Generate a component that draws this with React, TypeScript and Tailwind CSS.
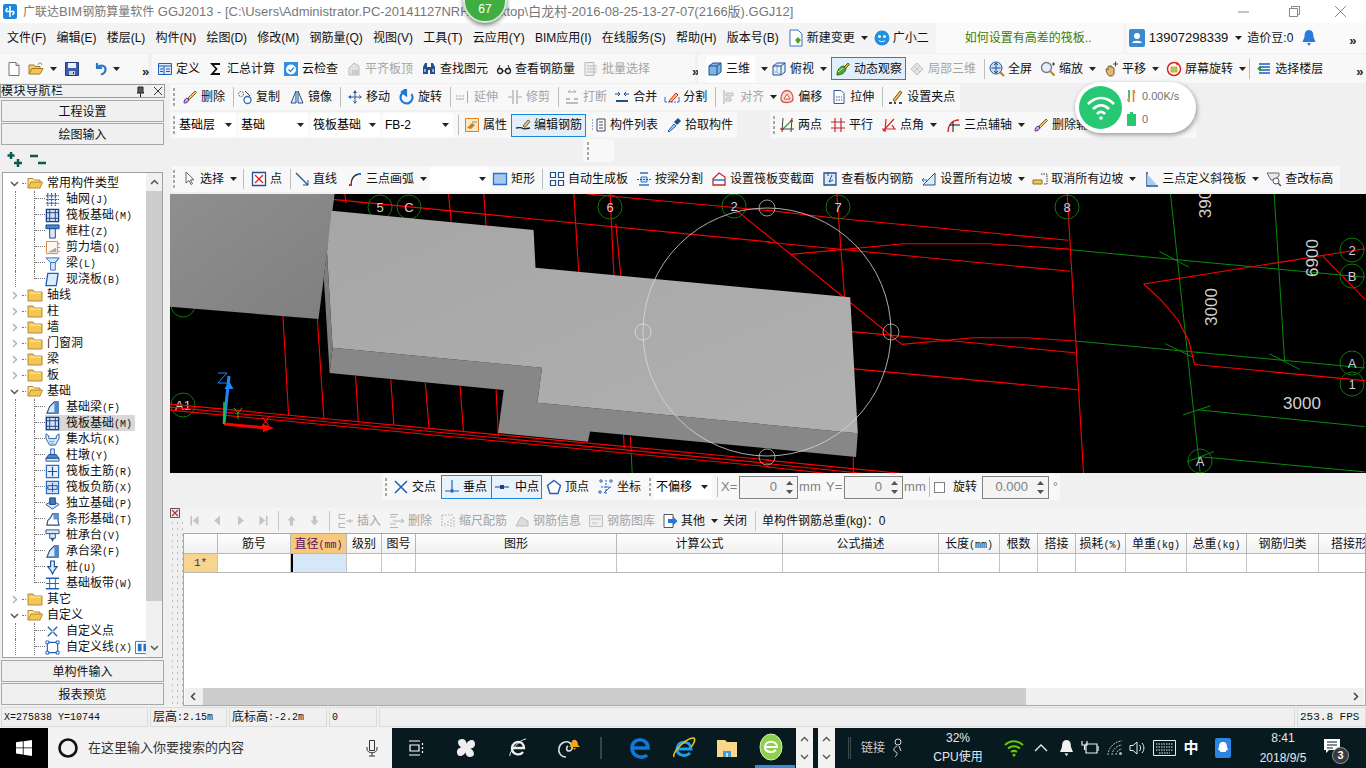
import type { ReactNode } from "react";

const B = "#1f5fb8";
const R = "#e02020";
const GY = "#a8a8a8";
const Y = "#f4c64e";

const icons: Record<string, ReactNode> = {
  new: <><path d="M3 1.500h7l3 3v10H3z" fill="#fff" stroke="#777" /><path d="M10 1.500v3h3" fill="#ddd" stroke="#777" /></>,
  open: <><path d="M1 13V4h5l1 1.500h5V8" fill="#f3cf72" stroke="#a87a20" /><path d="M1 13l3-5.500h11L12 13z" fill={Y} stroke="#a87a20" /><path d="M10 3.500c1-2 3-2 4 0" fill="none" stroke="#3a70c0" /></>,
  save: <><path d="M1.500 1.500h13v13h-13z" fill="#3c5fb0" stroke="#22397c" /><path d="M4 2h8v5H4z" fill="#eef" /><path d="M5 10h6v4H5z" fill="#ccd" /><path d="M9 11h1v2H9z" fill="#335" /></>,
  undo: <path d="M4 2v5h5M4.500 6.500C7 3.500 13 4 12.500 9c-.3 2.500-2.500 4-4.500 4.500" fill="none" stroke="#2a78d0" strokeWidth="2.200" />,
  define: <><path d="M1.500 2.500h13v11h-13z" fill="#dbe9f8" stroke={B} /><path d="M1.500 5h13M7 5v8.500M3 8h3M3 10.500h3M9 8h4M9 10.500h4" stroke={B} /></>,
  sigma: <path d="M12 3H4l4.500 5L4 13h8" fill="none" stroke="#111" strokeWidth="1.800" />,
  cloud: <><path d="M1 1h14v14H1z" fill="#2f8fe0" /><circle cx="8" cy="8.500" r="5" fill="#fff" /><path d="M5.500 8.500l2 2 3.500-4" fill="none" stroke="#2f8fe0" strokeWidth="1.500" /></>,
  flat: <><path d="M3 14V7l5-5 5 3v9z" fill="#e2e2e2" stroke="#bbb" /><path d="M6 9h6v5H6z" fill="#ccc" /></>,
  find: <><path d="M2 6l2-4h2v4h4V2h2l2 4v7h-5V9H7v4H2z" fill="#24508c" /><path d="M3 8h2v3H3zM11 8h2v3h-2z" fill="#7fb2ea" /></>,
  glasses: <><circle cx="4" cy="10" r="2.500" fill="none" stroke="#222" strokeWidth="1.300" /><circle cx="12" cy="10" r="2.500" fill="none" stroke="#222" strokeWidth="1.300" /><path d="M6.500 10h3M2 9l2-5M14 9l-2-5" stroke="#222" /></>,
  batch: <><path d="M2 1.500h9v13H2z" fill="#eee" stroke="#bbb" /><path d="M4 5h10M4 8h10M4 11h10" stroke="#bbb" /></>,
  cube: <><path d="M2 5l4-3h8v9l-4 3H2z" fill="#7fb6e6" stroke="#1d4f88" /><path d="M2 5h8v9M10 5l4-3" fill="none" stroke="#1d4f88" /></>,
  cubet: <><path d="M2 5l4-3h8v9l-4 3H2z" fill="#e8f1fa" stroke="#1d4f88" /><path d="M6 2v9H2M6 11l4 3" fill="none" stroke="#7fb2ea" /><path d="M2 5h8v9M10 5l4-3" fill="none" stroke="#1d4f88" /></>,
  orbit: <><path d="M2 14c0-5 3-9 7-9l2 2c0 4-4 7-9 7z" fill="#48a838" stroke="#1f6a1c" /><path d="M9 6l4-4 1.500 1.500-4 4z" fill="#d8b020" stroke="#6a5a10" /><path d="M3 11l5-4" stroke="#d8f0a0" /></>,
  gray3d: <><path d="M2 8l6-6 6 6-6 6z" fill="#e4e4e4" stroke="#c0c0c0" /><path d="M5 5l6 6M11 5l-6 6" stroke="#c8c8c8" /></>,
  globe: <><circle cx="7" cy="7" r="6" fill="#c9dcf2" stroke="#25508c" /><path d="M7 2.500v9M2.500 7h9M5 4l2-2 2 2M5 10l2 2 2-2" fill="none" stroke="#25508c" /><path d="M11 11l4 4" stroke="#c07820" strokeWidth="2" /></>,
  zoom: <><circle cx="6.500" cy="6.500" r="5" fill="#e6eef8" stroke="#6a7a90" strokeWidth="1.300" /><path d="M10 10l4.500 4.500" stroke="#b88a30" strokeWidth="2.200" /><path d="M12 3h3M13.500 1.500v3" stroke="#333" /></>,
  pan: <><path d="M3 9c0-2 1-2 2 0V6c0-1.500 2-1.500 2 0v-.5c0-1 2-1 2 .5v1c.5-1 2-.5 2 .5V12c0 2-1 3-3 3H7c-2 0-3-3-4-6z" fill="#e0b878" stroke="#7a5a28" /><path d="M10 3h5M12.500 .5v5" stroke="#445" /></>,
  rot: <><circle cx="8" cy="8" r="6.500" fill="#fff" stroke={R} strokeWidth="1.500" /><path d="M5 6h6v5H5z" fill="#9ed070" stroke="#d8a020" /><path d="M11 1l2 2-3 1" fill={R} /></>,
  floors: <><path d="M3 3h11M3 6h11M3 9h11M3 12h11" stroke="#1f5fb8" strokeWidth="1.500" /><path d="M1 7.500l4-3v6z" fill="#2a9a3a" /></>,
  brush: <><path d="M2 14c0-3 1-4 3-5l2 2c-1 2-2 3-5 3z" fill="#c8a0e0" stroke="#5a3a90" /><path d="M6 9l7-7 1.500 1.500-7 7z" fill="#f0c870" stroke="#806020" /></>,
  copy: <><circle cx="4" cy="5" r="2.500" fill="none" stroke="#444" strokeDasharray="1.500 1" /><circle cx="10.500" cy="11" r="3.500" fill="#fff" stroke="#2a6ab8" strokeWidth="1.300" /><path d="M8 2l5 5" stroke="#444" /></>,
  mirror: <><path d="M7 2L2 14h5zM9 2l5 12H9z" fill="#dce9f7" stroke="#25508c" /></>,
  move: <path d="M8 1l2 3H6zM8 15l2-3H6zM1 8l3-2v4zM15 8l-3-2v4zM7.500 3h1v10h-1zM3 7.500h10v1H3z" fill="#2a5a98" />,
  rot2: <path d="M12.500 5A6 6 0 1 1 6 2.600M7 0v6l-4-3z" fill="none" stroke="#2477d6" strokeWidth="2.200" />,
  extend: <path d="M12.500 2v12M1 7h2M4 7h2M7 7h2M1 10h8" stroke={GY} fill="none" />,
  trim: <path d="M6 1v14M10 1v14M1 8h4M11 8h4" stroke={GY} fill="none" strokeWidth="1.200" />,
  break: <><path d="M2 10h4M10 10h4M2 14h12" stroke={GY} strokeWidth="1.500" /><path d="M4 3h8M4 3l2-2M12 3l-2-2" stroke={GY} fill="none" /></>,
  merge: <><path d="M2 12h12" stroke="#1f4f90" strokeWidth="2" /><path d="M1 5h5M15 5h-5M6 5L4 3M6 5L4 7M10 5l2-2M10 5l2 2" stroke="#1f4f90" fill="none" /></>,
  split: <><path d="M1 13h14" stroke="#2070d0" strokeDasharray="2 1" /><path d="M1 8v5M15 8v5" stroke="#2070d0" /><path d="M5 12l7-8 2 2-7 7z" fill="#f0c870" stroke={R} /></>,
  align: <><path d="M3 1v14" stroke={GY} /><path d="M5 4h7v3H5zM5 9h5v3H5z" fill="#e4e4e4" stroke="#bbb" /></>,
  offset: <><path d="M8 1.500c4 0 6 4 6 8 0 3-2 4-6 4s-6-1-6-4c0-4 2-8 6-8z" fill="#f8d8d0" stroke="#c85a50" strokeWidth="1.300" /><path d="M5 10l3-5 3 5z" fill="#fff" stroke="#c85a50" /></>,
  stretch: <><path d="M3 1.500h7l3 3v10H3z" fill="#fff" stroke="#2a5a98" /><path d="M5 8h6M5 11h6" stroke="#2a5a98" strokeDasharray="1.500 1" /></>,
  gripi: <><path d="M1 14h3M6 14h2M11 14h3" stroke="#111" strokeWidth="1.500" /><path d="M5 11l7-9 2 1.500-7 9z" fill="#f0b860" stroke="#7a5a28" /></>,
  attr: <><path d="M1.500 1.500h13v13h-13z" fill="#fbe8c0" stroke="#e08020" /><path d="M3 11l5-5 3 2-4 4z" fill="#c88028" /><path d="M8 5h5" stroke="#888" /></>,
  edit: <><path d="M1 11c3 0 5-1 6 0s4 1 8 0" fill="none" stroke="#222" strokeWidth="1.300" /><path d="M8 9l5-6 2 1.500-5 6z" fill="#f0c870" stroke="#7a5a28" /></>,
  list: <><path d="M6 2h8v12H6z" fill="#fff" stroke="#445" /><path d="M8 5h4M8 8h4M8 11h4" stroke="#445" /><path d="M1 3h2M1 6h2M1 9h2M1 12h2" stroke="#2a6ab8" strokeDasharray="1 1" /></>,
  pick: <><path d="M2 14l6-7 2 2-7 6z" fill="#a8d0f0" stroke="#1f5fb8" /><path d="M8 5l4-4 3 3-4 4z" fill="#1f4f90" /></>,
  two: <><path d="M1 12h14M4 1l-1 14M13 1l-1 14" stroke="#444" /><path d="M3 13L13 3" stroke="#38a038" strokeWidth="1.300" /><circle cx="3.500" cy="12" r="1.300" fill={R} /><circle cx="12.500" cy="4" r="1.300" fill={R} /></>,
  par: <path d="M1 5h14M1 11h14M5 1v14M11 1v14" stroke="#c02830" strokeWidth="1.200" />,
  ang: <path d="M2 14L13 2M1 12h14M5 2l-1 13M11 8c1 1 2 2 2 4" fill="none" stroke={R} strokeWidth="1.200" />,
  arc3: <><path d="M3 15c0-7 4-12 11-12" fill="none" stroke={R} strokeWidth="1.300" /><path d="M8 5v10M5 8h10" stroke="#111" /></>,
  cursor: <path d="M5 1v11l3-2.500 2 4 1.500-.7-2-4h3.500z" fill="#fff" stroke="#666" />,
  point: <><path d="M1.500 1.500h13v13h-13z" fill="#fff" stroke="#24508c" strokeWidth="1.300" /><path d="M4 4l8 8M12 4l-8 8" stroke={R} strokeWidth="1.300" /></>,
  line: <><path d="M2 2l12 12" stroke="#24508c" strokeWidth="1.300" /><path d="M14 9v5H9" fill="none" stroke="#24508c" /></>,
  arc: <><path d="M4 14c0-6 3-10 8-11" fill="none" stroke="#333" strokeWidth="1.300" /><path d="M2 13h3v2H2z" fill={R} /><path d="M11 2h3v2h-3z" fill="#2a70c8" /></>,
  rect: <path d="M1.500 2.500h13v11h-13z" fill="#a8c8f0" stroke="#2a70c8" strokeWidth="1.300" />,
  auto: <path d="M1.500 1.500h5v5h-5zM9.500 1.500h5v5h-5zM1.500 9.500h5v5h-5zM9.500 9.500h5v5h-5z" fill="#fff" stroke="#24508c" strokeWidth="1.200" />,
  beamsplit: <><path d="M4 2h8M3 14h10" stroke="#2a70c8" strokeWidth="1.500" /><path d="M5 6h6v5H5z" fill="#d4e6f8" stroke="#2a70c8" /><path d="M1 8.500h14" stroke="#c02830" strokeDasharray="2 1" /></>,
  section: <><path d="M2 14V8l6-6 6 4v8z" fill="#fff" stroke="#c02830" strokeWidth="1.300" /><path d="M2 9h12" stroke="#2a70c8" strokeWidth="1.500" /></>,
  viewr: <><path d="M2 2h12v12H2z" fill="#dcebf8" stroke="#24508c" strokeWidth="1.300" /><path d="M6 1v4M10 4l-3 7 4-2" fill="none" stroke="#24508c" /></>,
  slope: <><path d="M2 14L14 2v12z" fill="#dcebf8" stroke="#24508c" /><path d="M1 9h5M1 9l2-2M1 9l2 2" fill="none" stroke="#2a70c8" /></>,
  cancel: <><path d="M1 9h9v4H1z" fill={Y} stroke="#907020" /><path d="M9 3h6v10h-3" fill="none" stroke="#333" strokeDasharray="1.500 1" /></>,
  three: <><path d="M4 1v14h11" fill="none" stroke="#24508c" strokeWidth="1.500" /><path d="M4 3l10 11H4z" fill="#a8ccf0" /></>,
  elev: <><path d="M1 2h12v3L8 9H5z" fill="#e8e8e8" stroke="#667" /><circle cx="10" cy="10" r="3" fill="#fff" stroke="#556" /><path d="M12 12l3 3" stroke="#556" strokeWidth="1.500" /></>,
  cross: <path d="M2 2l12 12M14 2L2 14" stroke="#1f5fb8" strokeWidth="1.500" />,
  perp: <><path d="M8 1v11M1 12h14" stroke="#1f5fb8" strokeWidth="1.200" /><path d="M6.500 10.500h3v3h-3z" fill="#1f5fb8" /></>,
  mid: <><path d="M1 8h14" stroke="#1f5fb8" strokeWidth="1.200" /><path d="M6 6h4v4H6z" fill="#1f3f88" /></>,
  penta: <path d="M8 1.500l6.500 5L12 14.500H4L1.500 6.500z" fill="#fff" stroke="#1f5fb8" strokeWidth="1.400" />,
  coord: <><path d="M8 1v14M3 8h10" stroke="#1f5fb8" strokeDasharray="2 1" /><circle cx="3" cy="2" r="1.200" fill="none" stroke="#1f5fb8" /><circle cx="13" cy="2" r="1.200" fill="none" stroke="#1f5fb8" /><circle cx="2" cy="13" r="1.200" fill="none" stroke="#1f5fb8" /><path d="M12 8l-6 6" stroke="#1f5fb8" /></>,
  first: <path d="M3 2h2v12H3zM13 2v12L6 8z" fill="#c4c4c4" />,
  prev: <path d="M11 2v12L4 8z" fill="#c4c4c4" />,
  next: <path d="M5 2v12l7-6z" fill="#c4c4c4" />,
  last: <path d="M11 2h2v12h-2zM3 2v12l7-6z" fill="#c4c4c4" />,
  up: <path d="M8 2l5 6h-3v6H6V8H3z" fill="#c4c4c4" />,
  down: <path d="M8 14l5-6h-3V2H6v6H3z" fill="#c4c4c4" />,
  ins: <path d="M1 1.500h6M1 14.500h6M1 1.500v4h6M1 14.500v-4h6M8 8h7M12 6v4" fill="none" stroke="#b4b4b4" />,
  del: <path d="M1 1.500h8M1 14.500h8M1 4h6M1 11h6M4 8h11M12 6l3 2-3 2" fill="none" stroke="#b4b4b4" />,
  scale: <path d="M2 2v12M5 10v4M8 8v6M11 6v8M14 4v10M2 2h12" fill="none" stroke="#bcbcbc" strokeWidth="1.200" strokeDasharray="2 1" />,
  info: <path d="M2 13l5-9 3 2 4 2v5z" fill="#ddd" stroke="#bbb" />,
  lib: <><path d="M1.500 2.500h13v11h-13z" fill="#eee" stroke="#c0c0c0" /><path d="M3 6h10M4 10h5" stroke="#c0c0c0" /></>,
  other: <><path d="M2 1.500h9v13H2z" fill="#fff" stroke="#556" /><path d="M6 6h5V3.500L15.500 8 11 12.500V10H6z" fill="#2477d6" /></>,
  axis: <path d="M1 4h14M1 8h14M1 12h14M3 1v14M7 1v14M11 1v14" stroke="#2a64b8" strokeWidth="1.300" strokeDasharray="2.500 .6" />,
  raft: <><path d="M1.500 1.500h13v13h-13z" fill="#cfe0f5" stroke="#1a3f88" strokeWidth="1.400" /><path d="M5 1.500v13M11 1.500v13M1.500 5h13M1.500 11h13" stroke="#1a3f88" /></>,
  col: <><path d="M1 1h14v4H1z" fill="#3f8ad8" stroke="#1a3f88" /><path d="M5 5h6v10H5z" fill="#dbe9f8" stroke="#1a3f88" /></>,
  wall: <><path d="M1.500 1.500h12v13h-12z" fill="#fdf6ee" stroke="#d08048" /><path d="M3 13l9-5v5z" fill="#aaa" /><path d="M14 4h2M14 8h2M14 12h2" stroke="#d08048" /></>,
  beam: <><path d="M1 2h14l-4 5v8H6V7z" fill="#dbe9f8" stroke="#2a70c8" /><path d="M11 7l4-5M6 7h5" stroke="#2a70c8" /></>,
  slab: <path d="M3 1.500h11l-2 13H1z" fill="#dcebf8" stroke="#1f5fb8" strokeWidth="1.400" />,
  fbeam: <><path d="M2 14l3-7 5-5h4v12z" fill="#dbe9f8" stroke="#1f4f90" strokeWidth="1.200" /><path d="M10 2v12h4V2z" fill="#4a88d0" /></>,
  sump: <><path d="M1 2l3 2v3h8V4l3-2v5l-4 7H5L1 7z" fill="#dbe9f8" stroke="#1f5fb8" /><path d="M5 10h6M6 12h4" stroke="#1f5fb8" strokeDasharray="1 1" /></>,
  pier: <><path d="M6 1h4v6H6z" fill="#dbe9f8" stroke="#1f5fb8" /><path d="M4 7h8l3 4H1z" fill="#4a88d0" stroke="#1f4f90" /><path d="M1 11h14v3H1z" fill="#dbe9f8" stroke="#1f4f90" /></>,
  main: <><path d="M1.500 1.500h13v13h-13z" fill="#e4effb" stroke="#2a70c8" strokeWidth="1.300" /><path d="M8 3v10M3 8h10" stroke="#1f4f90" strokeWidth="1.300" /></>,
  neg: <><path d="M1.500 1.500h13v13h-13z" fill="#cfe0f5" stroke="#2a70c8" strokeWidth="1.300" /><path d="M8 3v10M3 6h10v4H3z" fill="none" stroke="#1f4f90" /></>,
  iso: <><path d="M1 9l7-4 7 4-7 5z" fill="#dbe9f8" stroke="#1f4f90" /><path d="M5 2h6v7H5z" fill="#3f78c0" stroke="#1a3f88" /></>,
  strip: <><path d="M2 14l1-5 3-3 2-4h6v8l1 4z" fill="#fff" stroke="#1f4f90" strokeWidth="1.200" /><path d="M9 2h5v6H9z" fill="#5a94d8" /></>,
  cap: <><path d="M1 2h14v4H1z" fill="#dbe9f8" stroke="#1f4f90" /><path d="M5 6h6v5H5z" fill="#dbe9f8" stroke="#1f4f90" /><path d="M6 11h4l-2 4z" fill="#1f4f90" /></>,
  pile: <path d="M6 1h4v6h3l-3 4 -2 4-2-4-3-4h3z" fill="#dbe9f8" stroke="#1f4f90" strokeWidth="1.200" />,
  band: <><path d="M1 2.500h14M1 13.500h14" stroke="#1f5fb8" strokeWidth="1.600" /><path d="M5 3v10M11 3v10M1 8h14" stroke="#1f5fb8" /></>,
  cpt: <><path d="M3 3l10 10M13 3L3 13" stroke="#1f5fb8" strokeWidth="1.400" /><circle cx="8" cy="8" r="1.300" fill="#bcd" /></>,
  cline: <><path d="M2.500 2.500h11v11h-11z" fill="none" stroke="#1f5fb8" strokeWidth="1.200" /><path d="M1 1h3v3H1zM12 1h3v3h-3zM1 12h3v3H1zM12 12h3v3h-3z" fill="#fff" stroke="#1f5fb8" /></>,
  cols: <><path d="M.5 1.500h15v13H.5z" fill="#fff" stroke="#2a70c8" /><path d="M3 4h4v8H3zM9 4h4v8H9z" fill="#2a70c8" /></>,
  foldero: <><path d="M1 13V3.500h5L7.500 5H13v2" fill="#fbe6a8" stroke="#b88a30" /><path d="M1 13l3-6h11.500L13 13z" fill={Y} stroke="#b88a30" /></>,
  folder: <><path d="M1 14V3h5l1.500 2H15v9z" fill={Y} stroke="#b88a30" /><path d="M2 6h12" stroke="#fdf0c0" /></>,
};

function Ic({ n, s = 16 }: { n: string; s?: number }) {
  return (
    <svg width={s} height={s} viewBox="0 0 16 16" className="shrink-0">
      {icons[n]}
    </svg>
  );
}

function Caret({ className = "" }: { className?: string }) {
  return (
    <svg width="7" height="4" viewBox="0 0 7 4" className={`shrink-0 ${className}`}>
      <path d="M0 0h7L3.500 4z" fill="#222" />
    </svg>
  );
}

function Grip() {
  return (
    <div className="flex flex-col gap-[2px] w-[2px] shrink-0">
      <div className="w-[2px] h-[3px] bg-[#a8a8a8]" />
      <div className="w-[2px] h-[3px] bg-[#a8a8a8]" />
      <div className="w-[2px] h-[3px] bg-[#a8a8a8]" />
      <div className="w-[2px] h-[3px] bg-[#a8a8a8]" />
    </div>
  );
}

function Sep() {
  return <div className="w-px h-[20px] bg-[#bdbdbd] shrink-0 -mr-[2px]" />;
}

function More() {
  return <span className="text-[13px] leading-none font-bold text-[#222] -mt-[8px]">»</span>;
}

// one toolbar button: icon, label and an optional drop arrow
function T({
  i,
  t,
  c,
  g,
  className = "",
}: {
  i: string;
  t: string;
  c?: boolean;
  g?: boolean;
  className?: string;
}) {
  return (
    <div className={`flex items-center shrink-0 ${g ? "text-[#a4a4a4]" : "text-[#111]"} ${className}`}>
      <Ic n={i} />
      <span className="ml-[3px] whitespace-nowrap">{t}</span>
      {c && <Caret className="ml-[6px]" />}
    </div>
  );
}

function ActiveT({ i, t, className = "" }: { i: string; t: string; className?: string }) {
  return (
    <div className={`flex items-center h-[23px] px-[3px] border border-[#1a86d8] bg-[#e2effa] text-[#111] shrink-0 ${className}`}>
      <Ic n={i} />
      <span className="ml-[3px] whitespace-nowrap">{t}</span>
    </div>
  );
}

function Sel({ t, className }: { t: string; className: string }) {
  return (
    <div className={`flex items-center justify-between h-[24px] bg-white pl-[2px] pr-[4px] shrink-0 ${className}`}>
      <span>{t}</span>
      <Caret />
    </div>
  );
}

function Spin({ v, className }: { v: string; className: string }) {
  return (
    <div className={`flex items-center justify-end h-[23px] border border-[#808080] bg-[#f4f4f4] text-[#808080] text-[13px] shrink-0 ${className}`}>
      <span>{v}</span>
      <div className="flex flex-col gap-[5px] ml-[9px] mr-[4px]">
        <svg width="7" height="4" viewBox="0 0 7 4"><path d="M0 4h7L3.500 0z" fill="#555" /></svg>
        <svg width="7" height="4" viewBox="0 0 7 4"><path d="M0 0h7L3.500 4z" fill="#555" /></svg>
      </div>
    </div>
  );
}

// label whose bracket part is set in the narrow mono face, as in the tree and grid
function Lbl({ t }: { t: string }) {
  const k = t.indexOf("(");
  if (k < 0) return <span>{t}</span>;
  return (
    <span className="whitespace-nowrap">
      {t.slice(0, k)}
      <span className="text-[10px] [font-family:'Liberation_Mono',monospace]">{t.slice(k)}</span>
    </span>
  );
}

function Chevron({ open }: { open: boolean }) {
  return (
    <svg width="9" height="9" viewBox="0 0 9 9" className="shrink-0">
      <path d={open ? "M1 3l3.500 3.500L8 3" : "M3 1l3.500 3.500L3 8"} fill="none" stroke={open ? "#555" : "#b4b4b4"} strokeWidth="1.500" />
    </svg>
  );
}

function Group({ t, open }: { t: string; open?: boolean }) {
  return (
    <div className="flex items-center h-[16px] pl-[7px]">
      <Chevron open={!!open} />
      <div className="w-[4px] ml-[3px] border-t border-dotted border-[#777]" />
      <div className="ml-[1px]"><Ic n={open ? "foldero" : "folder"} /></div>
      <span className="ml-[4px] text-[#111]">{t}</span>
    </div>
  );
}

function Leaf({ i, t, last, sel, extra }: { i: string; t: string; last?: boolean; sel?: boolean; extra?: boolean }) {
  return (
    <div className="flex h-[16px] pl-[12px]">
      <div className="w-[19px] h-[16px] border-l border-dotted border-[#777] shrink-0" />
      <div className={`w-[11px] border-l border-dotted border-[#777] shrink-0 ${last ? "h-[8px]" : "h-[16px]"}`}>
        <div className="h-[8px] border-b border-dotted border-[#777]" />
      </div>
      <div className={`flex items-center ${sel ? "bg-[#d8d8d8]" : ""}`}>
        <Ic n={i} s={15} />
        <span className="ml-[6px] pr-[3px] text-[#111]"><Lbl t={t} /></span>
        {extra && <Ic n="cols" s={15} />}
      </div>
    </div>
  );
}

function NavButton({ t }: { t: string }) {
  return (
    <div className="flex items-center justify-center h-[22px] pt-[1px] mx-[1px] border border-[#a8a8a8] bg-[#f0f0f0] text-[#111]">{t}</div>
  );
}

function LeftPanel() {
  return (
    <div className="w-[165px] shrink-0 flex flex-col text-[12px]">
      <div className="flex items-center h-[14px] border border-[#9a9a9a] text-[#111] overflow-hidden">
        <span className="tracking-[0.5px] whitespace-nowrap">模块导航栏</span>
        <svg width="9" height="11" viewBox="0 0 9 11" className="ml-[72px]"><path d="M2 1h5v5l1 1H1l1-1zM4.500 7v4" fill="#555" stroke="#222" /></svg>
        <svg width="8" height="8" viewBox="0 0 8 8" className="ml-[9px]"><path d="M0 0l8 8M8 0L0 8" stroke="#333" /></svg>
      </div>
      <div className="h-[2px]" />
      <NavButton t="工程设置" />
      <div className="h-px" />
      <NavButton t="绘图输入" />
      <div className="flex items-center h-[27px] pl-[7px] gap-[7px]">
        <svg width="16" height="16" viewBox="0 0 16 16"><path d="M4 1v7M.5 4.500h7M11 8v8M7 12h8" stroke="#0a5a50" strokeWidth="2.500" /></svg>
        <svg width="16" height="16" viewBox="0 0 16 16"><path d="M0 5h8M8 12h8" stroke="#0a5a50" strokeWidth="2.500" /></svg>
      </div>
      <div className="flex mx-[2px] h-[486px] border border-[#a0a0a0] bg-white overflow-hidden">
        <div className="flex-1 pt-[2px] overflow-hidden whitespace-nowrap">
          <Group t="常用构件类型" open />
          <Leaf i="axis" t="轴网(J)" />
          <Leaf i="raft" t="筏板基础(M)" />
          <Leaf i="col" t="框柱(Z)" />
          <Leaf i="wall" t="剪力墙(Q)" />
          <Leaf i="beam" t="梁(L)" />
          <Leaf i="slab" t="现浇板(B)" last />
          <Group t="轴线" />
          <Group t="柱" />
          <Group t="墙" />
          <Group t="门窗洞" />
          <Group t="梁" />
          <Group t="板" />
          <Group t="基础" open />
          <Leaf i="fbeam" t="基础梁(F)" />
          <Leaf i="raft" t="筏板基础(M)" sel />
          <Leaf i="sump" t="集水坑(K)" />
          <Leaf i="pier" t="柱墩(Y)" />
          <Leaf i="main" t="筏板主筋(R)" />
          <Leaf i="neg" t="筏板负筋(X)" />
          <Leaf i="iso" t="独立基础(P)" />
          <Leaf i="strip" t="条形基础(T)" />
          <Leaf i="cap" t="桩承台(V)" />
          <Leaf i="fbeam" t="承台梁(F)" />
          <Leaf i="pile" t="桩(U)" />
          <Leaf i="band" t="基础板带(W)" last />
          <Group t="其它" />
          <Group t="自定义" open />
          <Leaf i="cpt" t="自定义点" />
          <Leaf i="cline" t="自定义线(X)" extra />
        </div>
        <div className="w-[16px] shrink-0 bg-[#f0f0f0] flex flex-col items-center">
          <svg width="9" height="6" viewBox="0 0 9 6" className="my-[6px]"><path d="M1 5l3.500-3.500L8 5" fill="none" stroke="#555" strokeWidth="1.500" /></svg>
          <div className="w-full h-[410px] bg-[#cdcdcd]" />
          <div className="flex-1" />
          <svg width="9" height="6" viewBox="0 0 9 6" className="my-[6px]"><path d="M1 1l3.500 3.500L8 1" fill="none" stroke="#555" strokeWidth="1.500" /></svg>
        </div>
      </div>
      <div className="h-[2px]" />
      <NavButton t="单构件输入" />
      <div className="h-px" />
      <NavButton t="报表预览" />
    </div>
  );
}

// canvas geometry was read off two crops; these map crop coordinates to page pixels
const pts = (ox: number, a: number[]) => {
  const out: string[] = [];
  for (let k = 0; k < a.length; k += 2) {
    out.push(`${(ox + a[k] / 2.613).toFixed(1)},${(190 + a[k + 1] / 2.98).toFixed(1)}`);
  }
  return out.join(" ");
};
const L = (a: number[]) => pts(170, a);
const Q = (a: number[]) => pts(766, a);

const redLines = [
  L([425, 28, 1568, 155]),
  L([1090, 12, 1568, 62]),
  L([457, 12, 460, 40]),
  L([728, 12, 735, 95]),
  L([820, 12, 826, 108]),
  L([1055, 12, 1068, 243]),
  L([1150, 12, 1160, 255]),
  L([1165, 100, 1178, 255]),
  L([295, 375, 310, 672]),
  L([385, 380, 402, 680]),
  L([485, 555, 492, 690]),
  L([577, 565, 585, 700]),
  L([667, 575, 677, 712]),
  L([758, 585, 767, 722]),
  L([852, 595, 858, 735]),
  L([1185, 730, 1187, 770]),
  L([1203, 735, 1205, 780]),
  Q([0, 60, 190, 85, 790, 150]),
  Q([65, 192, 360, 160, 580, 160, 792, 176]),
  Q([0, 155, 450, 205, 795, 242]),
  Q([-78, 60, 355, 460, 540, 440, 680, 440, 807, 450]),
  Q([225, 422, 540, 455, 807, 485]),
  Q([230, 533, 815, 595]),
  Q([185, 12, 205, 320]),
  Q([787, 12, 830, 850]),
  Q([987, 280, 1565, 175]),
  Q([987, 280, 1030, 325, 1075, 385, 1105, 450, 1120, 520]),
  Q([1120, 520, 1565, 568]),
  Q([1455, 197, 1565, 325]),
];

const greenLines = [
  Q([793, 178, 1565, 260]),
  Q([808, 450, 1565, 530]),
  Q([1057, 12, 1135, 850]),
  Q([1328, 12, 1355, 510]),
  Q([1128, 655, 1565, 705]),
  Q([1135, 795, 1565, 840]),
  Q([1028, 183, 1105, 230]),
  Q([1043, 458, 1115, 498]),
  Q([1315, 488, 1395, 535]),
  Q([1090, 670, 1162, 643]),
  Q([1100, 810, 1170, 780]),
  L([1205, 785, 1208, 850]),
];

const bundle = [
  L([0, 638, 1568, 805]),
  L([0, 647, 1568, 815]),
  L([0, 656, 1568, 825]),
  Q([0, 805, 400, 850]),
  Q([0, 815, 300, 850]),
  Q([0, 825, 200, 850]),
  Q([228, 795, 228, 850]),
];

const axisMarks: [number, number, string][] = [
  [380, 207, "5"],
  [409, 207, "C"],
  [610, 207, "6"],
  [734, 206, "2"],
  [838, 207, "7"],
  [1067, 207, "8"],
  [1352, 250, "2"],
  [1352, 276, "B"],
  [1352, 363, "A"],
  [1352, 384, "1"],
  [1200, 461, "A"],
  [183, 405, "A1"],
  [183, 305, ""],
];

function Canvas() {
  return (
    <div className="h-[279px] bg-black overflow-hidden shrink-0">
      <svg width="1196" height="279" viewBox="170 194 1196 279" className="block">
        <defs>
          <linearGradient id="top" x1="0" y1="0" x2="1" y2="1">
            <stop offset="0" stopColor="#8f8f8f" />
            <stop offset="1" stopColor="#7f7f7f" />
          </linearGradient>
          <linearGradient id="plate" x1="0" y1="0" x2="1" y2="1">
            <stop offset="0" stopColor="#a6a6a6" />
            <stop offset="1" stopColor="#b0b0b0" />
          </linearGradient>
        </defs>
        {greenLines.map((p, k) => (
          <polyline key={k} points={p} fill="none" stroke="#0a8a0a" strokeWidth="1" />
        ))}
        {redLines.map((p, k) => (
          <polyline key={k} points={p} fill="none" stroke="#ff0000" strokeWidth="1.100" />
        ))}
        {axisMarks.map(([x, y, s], k) => (
          <g key={k}>
            <circle cx={x} cy={y} r="12" fill="none" stroke="#0a7a0a" strokeWidth="1" />
            <text x={x} y={y + 5} textAnchor="middle" fontSize="13" fill="#cfcfcf" fontFamily="'Liberation Sans',sans-serif">{s}</text>
          </g>
        ))}
        <polygon points={L([0, 12, 430, 12, 388, 384, 0, 348])} fill="url(#top)" />
        <polygon points={L([402, 260, 410, 185, 425, 470, 417, 546])} fill="#7c7c7c" />
        <polygon
          points="332.600,347.700 542,367.700 537.400,402.700 857.800,433.300 856,457 766,448.300 590,431.600 588,441.700 498,433 503.700,390 329.600,373"
          fill="#878787"
        />
        <polygon
          points="331.500,210.800 533.600,230 535.500,267.800 850.200,297.300 857.800,433.300 537.400,402.700 542,367.700 332.600,347.700 327,252"
          fill="url(#plate)"
        />
        {bundle.map((p, k) => (
          <polyline key={k} points={p} fill="none" stroke="#ff0000" strokeWidth="1.100" />
        ))}
        <circle cx="767" cy="332" r="124" fill="none" stroke="#d8d8d8" strokeWidth="0.800" />
        <circle cx="767" cy="208" r="8" fill="none" stroke="#bbb" strokeWidth="0.800" />
        <circle cx="643" cy="332" r="8" fill="none" stroke="#ddd" strokeWidth="0.800" />
        <circle cx="891" cy="332" r="8" fill="none" stroke="#bbb" strokeWidth="0.800" />
        <circle cx="767" cy="457" r="8" fill="none" stroke="#bbb" strokeWidth="0.800" />
        <path d="M224 424L229 376" stroke="#1c86ff" strokeWidth="3" />
        <path d="M229 381l-4.500 8h9z" fill="#1c86ff" />
        <path d="M224 424l44 4" stroke="#ff0000" strokeWidth="3" />
        <path d="M274 428l-11-4v8z" fill="#ff0000" />
        <path d="M224 402v22" stroke="#20d020" strokeWidth="1.500" />
        <path d="M234 408l4 5 4-5M238 413v6" stroke="#20c020" fill="none" />
        <path d="M218 373h9l-9 10h9" stroke="#1c86ff" fill="none" />
        <path d="M262 417l7 9M269 417l-7 9" stroke="#ff2020" />
        <g fill="#d0d0d0" fontSize="17" fontFamily="'Liberation Sans',sans-serif">
          <text x="1302" y="409" textAnchor="middle">3000</text>
          <text transform="translate(1217,307) rotate(-90)" textAnchor="middle">3000</text>
          <text transform="translate(1318,258) rotate(-90)" textAnchor="middle">6900</text>
          <text transform="translate(1211,204) rotate(-90)" textAnchor="middle">390</text>
        </g>
      </svg>
    </div>
  );
}

const gridCols =
  "grid grid-cols-[34px_73px_56px_35px_34px_201px_166px_156px_61px_38px_38px_50px_61px_60px_72px_48px]";

const headers = ["", "筋号", "直径(mm)", "级别", "图号", "图形", "计算公式", "公式描述", "长度(mm)", "根数", "搭接", "损耗(%)", "单重(kg)", "总重(kg)", "钢筋归类", "搭接形式"];

function RebarGrid() {
  return (
    <div className="flex-1 flex flex-col border border-[#a8a8a8] bg-white overflow-hidden">
      <div className={`${gridCols} h-[20px] border-b border-[#b8b8b8]`}>
        {headers.map((h, k) => (
          <div
            key={k}
            className={`flex items-center overflow-hidden whitespace-nowrap border-r border-[#b8b8b8] ${
              k === 15 ? "justify-start pl-[12px]" : "justify-center"
            } ${k === 2 ? "bg-[#f7c97c] text-[#5a1060]" : "bg-gradient-to-b from-white to-[#f0f0f0] text-[#111]"}`}
          >
            <Lbl t={h} />
          </div>
        ))}
      </div>
      <div className={`${gridCols} h-[19px] border-b border-[#b8b8b8]`}>
        {headers.map((_, k) => (
          <div
            key={k}
            className={`border-r border-[#c4c4c4] ${
              k === 0
                ? "bg-[#f7d490] text-[#5a1060] flex items-center justify-center [font-family:'Liberation_Mono',monospace] text-[11px]"
                : k === 2
                  ? "bg-[#d6e8f8] border-l-2 border-l-black"
                  : ""
            }`}
          >
            {k === 0 ? "1*" : ""}
          </div>
        ))}
      </div>
      <div className="flex-1" />
      <div className="flex items-center h-[17px] mx-[1px] bg-[#f0f0f0] shrink-0">
        <svg width="18" height="9" viewBox="0 0 18 9" className="shrink-0"><path d="M10 1L6.500 4.500 10 8" fill="none" stroke="#444" strokeWidth="1.500" /></svg>
        <div className="w-[823px] h-full bg-[#cdcdcd]" />
        <div className="flex-1" />
        <svg width="18" height="9" viewBox="0 0 18 9" className="shrink-0"><path d="M8 1l3.500 3.500L8 8" fill="none" stroke="#444" strokeWidth="1.500" /></svg>
      </div>
    </div>
  );
}

function StatusBar() {
  const cell = "h-[20px] flex items-center px-[2px] border border-[#dcdcdc] text-[#111] shrink-0 overflow-hidden whitespace-nowrap";
  const mono = "text-[10px] [font-family:'Liberation_Mono',monospace]";
  return (
    <div className="h-[22px] flex items-center gap-[2px] pl-[1px] text-[12px] shrink-0">
      <div className={`${cell} w-[147px] ${mono}`}>X=275838 Y=10744</div>
      <div className={`${cell} w-[77px]`}>层高<span className={mono}>:2.15m</span></div>
      <div className={`${cell} w-[98px]`}>底标高<span className={mono}>:-2.2m</span></div>
      <div className={`${cell} w-[48px] ${mono}`}>0</div>
      <div className={`${cell} flex-1`} />
      <div className={`${cell} w-[69px] ${mono} !text-[11px]`}>253.8 FPS</div>
    </div>
  );
}

function Slot({ className, children }: { className: string; children?: ReactNode }) {
  return <div className={`flex items-center justify-center shrink-0 h-full ${className}`}>{children}</div>;
}

function Taskbar() {
  return (
    <div className="h-[40px] flex items-stretch bg-[#071a20] text-white text-[12px] shrink-0 overflow-hidden">
      <Slot className="w-[48px] bg-black">
        <svg width="16" height="16" viewBox="0 0 16 16"><path d="M0 2.300l6.800-1V7.500H0zM7.600 1.200L16 0v7.500H7.600zM0 8.300h6.800v6.300l-6.800-1zM7.600 8.300H16V16l-8.400-1.200z" fill="#fff" /></svg>
      </Slot>
      <div className="w-[344px] shrink-0 bg-[#f2f2f2] flex items-center text-[#333] text-[13px]">
        <svg width="22" height="22" viewBox="0 0 22 22" className="ml-[9px]"><circle cx="11" cy="11" r="8.500" fill="none" stroke="#111" strokeWidth="2.600" /></svg>
        <span className="ml-[9px] whitespace-nowrap">在这里输入你要搜索的内容</span>
        <svg width="12" height="18" viewBox="0 0 12 18" className="ml-[122px]"><path d="M3.500 1.500h5v10h-5zM1 8v2c0 5 10 5 10 0V8M6 14v3M3 17h6" fill="none" stroke="#333" /></svg>
      </div>
      <Slot className="w-[48px]">
        <svg width="16" height="16" viewBox="0 0 16 16"><path d="M1 1h11M1 15h11M2 5h9v6H2zM14.500 3v2M14.500 7v2M14.500 11v2" fill="none" stroke="#fff" strokeWidth="1.200" /></svg>
      </Slot>
      <Slot className="w-[52px]">
        <svg width="22" height="22" viewBox="0 0 22 22"><path d="M11 11C5 11 3 8 3 5s5-4 7-2 2 5 1 8zM11 11c0-6 3-8 6-8s4 5 2 7-5 2-8 1zM11 11c6 0 8 3 8 6s-5 4-7 2-2-5-1-8zM11 11c0 6-3 8-6 8s-4-5-2-7 5-2 8-1z" fill="#eee" /></svg>
      </Slot>
      <Slot className="w-[52px]">
        <svg width="22" height="24" viewBox="0 0 22 24"><path d="M5 12h12c0-8-11-8-12 0 0 7 8 8 11 4" fill="none" stroke="#eee" strokeWidth="2.400" /><path d="M3 20C1 17 13 3 19 3" fill="none" stroke="#eee" /></svg>
      </Slot>
      <Slot className="w-[52px]">
        <svg width="28" height="26" viewBox="0 0 28 26"><path d="M10 22c-5 0-8-4-7-9s7-8 11-5 2 8-1 8-3-4-1-5" fill="none" stroke="#ddd" strokeWidth="1.600" /><path d="M15 10c0-7 7-7 7 0l2 2H13z M17 13h3l-1.500 2z" fill="#f0a818" /></svg>
      </Slot>
      <div className="w-[4px] shrink-0" />
      <Slot className="w-[2px]"><div className="w-[2px] h-[22px] bg-[#33444a]" /></Slot>
      <div className="w-[16px] shrink-0" />
      <Slot className="w-[44px]">
        <svg width="22" height="24" viewBox="0 0 22 24"><path d="M3 12h16c0-11-16-11-16 0 0 9 11 11 15 7" fill="none" stroke="#0f78d8" strokeWidth="3.600" /></svg>
      </Slot>
      <Slot className="w-[43px]">
        <svg width="26" height="26" viewBox="0 0 26 26"><path d="M6 14h14c0-9-14-9-14 0 0 7 9 8 13 4" fill="none" stroke="#1ea0e8" strokeWidth="3" /><path d="M3 22C1 17 16 2 23 3c2 2-1 7-3 9" fill="none" stroke="#f4c020" strokeWidth="1.600" /></svg>
      </Slot>
      <Slot className="w-[44px]">
        <svg width="22" height="22" viewBox="0 0 22 22"><path d="M1 3h8l2 2h10v15H1z" fill="#f6d888" /><path d="M7 14h8v6H7z" fill="#38a0e0" /><path d="M10 16h2v4h-2z" fill="#f6d888" /></svg>
      </Slot>
      <div className="w-[44px] shrink-0 flex flex-col items-center h-full relative">
        <svg width="26" height="30" viewBox="0 0 26 30" className="mt-[5px]"><ellipse cx="13" cy="14" rx="11" ry="13" fill="#8ed04a" stroke="#d8f0b0" /><path d="M7 14h12c0-7-12-7-12 0 0 6 8 6 11 3" fill="none" stroke="#fff" strokeWidth="2.200" /></svg>
        <div className="absolute bottom-0 left-[6px] right-[-2px] h-[3px] bg-[#3a8ad8]" />
      </div>
      <div className="w-[3px] shrink-0" />
      <div className="w-[17px] shrink-0 bg-[#f2f2f2] flex flex-col items-center justify-between py-[8px]">
        <svg width="9" height="6" viewBox="0 0 9 6"><path d="M1 5l3.500-3.500L8 5" fill="none" stroke="#555" strokeWidth="1.300" /></svg>
        <svg width="9" height="6" viewBox="0 0 9 6"><path d="M1 1l3.500 3.500L8 1" fill="none" stroke="#555" strokeWidth="1.300" /></svg>
      </div>
      <div className="w-[5px] shrink-0" />
      <div className="w-[17px] shrink-0 bg-[#f2f2f2] flex flex-col items-center justify-between py-[8px]">
        <svg width="9" height="6" viewBox="0 0 9 6"><path d="M1 5l3.500-3.500L8 5" fill="none" stroke="#555" strokeWidth="1.300" /></svg>
        <svg width="9" height="6" viewBox="0 0 9 6"><path d="M1 1l3.500 3.500L8 1" fill="none" stroke="#555" strokeWidth="1.300" /></svg>
      </div>
      <div className="w-[13px] shrink-0" />
      <Slot className="w-[3px]"><div className="w-[3px] h-[22px] border-x border-[#3c4c50]" /></Slot>
      <div className="w-[10px] shrink-0" />
      <Slot className="w-[24px] text-[#ccc]">链接</Slot>
      <Slot className="w-[24px]">
        <svg width="10" height="20" viewBox="0 0 10 20"><circle cx="6" cy="4" r="3" fill="none" stroke="#ddd" /><path d="M5 8C1 10 1 13 4 14c2 1 1 3-1 5M7 8l2 5" fill="none" stroke="#ddd" /></svg>
      </Slot>
      <div className="w-[9px] shrink-0" />
      <div className="w-[80px] shrink-0 flex flex-col items-center justify-center leading-[19px] text-[#e8e8e8]">
        <span>32%</span>
        <span>CPU使用</span>
      </div>
      <div className="w-[6px] shrink-0" />
      <Slot className="w-[20px]">
        <svg width="20" height="20" viewBox="0 0 20 20"><path d="M1 7c5-5 13-5 18 0M4 10.500c3.500-3 8.500-3 12 0M7 14c2-1.500 4-1.500 6 0" fill="none" stroke="#66cc00" strokeWidth="2" /><circle cx="10" cy="17" r="1.500" fill="#66cc00" /></svg>
      </Slot>
      <div className="w-[7px] shrink-0" />
      <Slot className="w-[20px]">
        <svg width="14" height="8" viewBox="0 0 14 8"><path d="M1 7l6-6 6 6" fill="none" stroke="#eee" strokeWidth="1.300" /></svg>
      </Slot>
      <div className="w-[5px] shrink-0" />
      <Slot className="w-[20px]">
        <svg width="13" height="16" viewBox="0 0 13 16"><path d="M6.500 0c3.500 0 4.500 3 4.500 7l2 5H0l2-5c0-4 1-7 4.500-7zM4.500 13.500h4L6.500 16z" fill="#f2f2f2" /></svg>
      </Slot>
      <div className="w-[4px] shrink-0" />
      <Slot className="w-[20px]">
        <svg width="18" height="16" viewBox="0 0 18 16"><path d="M5 4h11v9H5zM16 7h2v3h-2zM1 1v4h5V1M3.500 5v5" fill="none" stroke="#eee" strokeWidth="1.200" /></svg>
      </Slot>
      <div className="w-[5px] shrink-0" />
      <Slot className="w-[20px]">
        <svg width="16" height="16" viewBox="0 0 16 16"><path d="M1 15C1 8 8 1 15 1M5 15c0-5 5-10 10-10M9 15c0-3 3-6 6-6" fill="none" stroke="#bbb" strokeDasharray="2 1" /><circle cx="13.500" cy="13.500" r="1.500" fill="#bbb" /></svg>
      </Slot>
      <div className="w-[3px] shrink-0" />
      <Slot className="w-[18px]">
        <svg width="16" height="16" viewBox="0 0 16 16"><path d="M1 5.500h3L8 2v12L4 10.500H1zM10.500 5c1.500 2 1.500 4 0 6M13 3c2.500 3 2.500 7 0 10" fill="none" stroke="#eee" /></svg>
      </Slot>
      <div className="w-[6px] shrink-0" />
      <Slot className="w-[24px]">
        <svg width="23" height="16" viewBox="0 0 23 16"><path d="M.5.500h22v15H.5z" fill="none" stroke="#eee" /><path d="M3 4h17M3 7h17M3 10h17M6 13h11" stroke="#eee" strokeDasharray="1.500 1" /></svg>
      </Slot>
      <div className="w-[6px] shrink-0" />
      <Slot className="w-[18px] text-[15px] font-bold">中</Slot>
      <div className="w-[15px] shrink-0" />
      <Slot className="w-[16px]">
        <svg width="16" height="20" viewBox="0 0 16 20"><rect width="16" height="20" rx="2" fill="#2a84e0" /><path d="M8 4c3 0 4 2 4 5l1 3-1.500 0c0 1-1 2-1 2H5.500s-1-1-1-2H3l1-3c0-3 1-5 4-5z" fill="#fff" /></svg>
      </Slot>
      <div className="w-[16px] shrink-0" />
      <div className="w-[72px] shrink-0 flex flex-col items-center justify-center leading-[20px] text-[#e8e8e8]">
        <span>8:41</span>
        <span>2018/9/5</span>
      </div>
      <div className="w-[2px] shrink-0" />
      <div className="w-[30px] shrink-0 relative">
        <svg width="17" height="15" viewBox="0 0 17 15" className="mt-[11px] ml-[3px]"><path d="M0 0h16v11H5l-3 3v-3H0z" fill="#fff" /><path d="M3 3h10M3 6h10M3 9h6" stroke="#071a20" /></svg>
        <div className="absolute left-[11px] top-[19px] w-[17px] h-[17px] rounded-full bg-[#3a3a3a] border border-[#999] flex items-center justify-center text-[11px] font-bold">3</div>
      </div>
    </div>
  );
}

export default function App() {
  return (
    <div className="relative w-[1366px] h-[768px] overflow-hidden flex flex-col bg-[#f0f0f0] text-[12px] [font-family:'Liberation_Sans','Noto_Sans_CJK_SC',sans-serif]">
      {/* title bar */}
      <div className="h-[23px] bg-white flex items-center shrink-0">
        <svg width="14" height="15" viewBox="0 0 14 15" className="ml-[3px]"><rect width="14" height="15" rx="2" fill="#1a86e0" /><path d="M7 2v11M3 7.500h8M3 7.500c0-2 1-3 2-3M11 7.500c0 2-1 3-2 3" fill="none" stroke="#fff" strokeWidth="1.500" /></svg>
        <span className="ml-[6px] text-[13px] text-[#777] whitespace-nowrap">
          <span className="text-[12px]">广联达</span>BIM<span className="text-[12px]">钢筋算量软件</span> GGJ2013 - [C:\Users\Administrator.PC-20141127NRHI\Desktop\白龙村-2016-08-25-13-27-07(2166版).GGJ12]
        </span>
        <div className="flex-1" />
        <svg width="11" height="2" viewBox="0 0 11 2"><path d="M0 1h11" stroke="#888" /></svg>
        <svg width="11" height="11" viewBox="0 0 11 11" className="ml-[40px]"><path d="M.5 2.500h8v8h-8zM2.500 2.500v-2h8v8h-2" fill="none" stroke="#888" /></svg>
        <svg width="11" height="11" viewBox="0 0 11 11" className="ml-[35px] mr-[20px]"><path d="M0 0l11 11M11 0L0 11" stroke="#888" /></svg>
      </div>

      {/* menu bar */}
      <div className="h-[30px] flex items-center shrink-0 text-[#111] whitespace-nowrap bg-[#f4f4f4]">
        <div className="flex items-center gap-[10.200px] pl-[7px]">
          <span>文件(F)</span>
          <span>编辑(E)</span>
          <span>楼层(L)</span>
          <span>构件(N)</span>
          <span>绘图(D)</span>
          <span>修改(M)</span>
          <span>钢筋量(Q)</span>
          <span>视图(V)</span>
          <span>工具(T)</span>
          <span>云应用(Y)</span>
          <span>BIM应用(I)</span>
          <span>在线服务(S)</span>
          <span>帮助(H)</span>
          <span>版本号(B)</span>
        </div>
        <div className="flex items-center ml-[9px]">
          <svg width="16" height="18" viewBox="0 0 16 18"><path d="M2 1h8l4 4v12H2z" fill="#fff" stroke="#3a70c0" /><path d="M7 11l3-3 3 3-3 4z" fill="#50a030" /></svg>
          <span className="ml-[3px]">新建变更</span>
          <Caret className="ml-[6px]" />
          <svg width="16" height="16" viewBox="0 0 16 16" className="ml-[6px]"><circle cx="8" cy="8" r="7.500" fill="#2090e0" /><circle cx="5.500" cy="6.500" r="1.500" fill="#fff" /><circle cx="10.500" cy="6.500" r="1.500" fill="#fff" /><path d="M5 10.500c2 1.500 4 1.500 6 0" stroke="#fff" fill="none" /></svg>
          <span className="ml-[3px]">广小二</span>
        </div>
        <div className="ml-[7px] w-[187px] h-full bg-[#fafafa] flex items-center pl-[29px] text-[#3f7a00]">如何设置有高差的筏板..</div>
        <div className="ml-[4px] flex-1 h-full bg-[#fafafa] flex items-center">
          <svg width="16" height="18" viewBox="0 0 16 18" className="ml-[2px]"><rect width="16" height="18" rx="2" fill="#3a8ad0" /><circle cx="8" cy="7" r="3" fill="#fff" /><path d="M3 14c1-3 9-3 10 0z" fill="#fff" /></svg>
          <span className="ml-[4px] text-[13px]">13907298339</span>
          <Caret className="ml-[7px]" />
          <span className="ml-[5px]">造价豆:0</span>
          <svg width="14" height="18" viewBox="0 0 14 18" className="ml-[9px]"><path d="M7 1c3.500 0 4.500 3 4.500 7l2 5H.5l2-5C2.500 4 3.500 1 7 1zM5 14h4l-2 3z" fill="#2a7ae0" /></svg>
          <div className="ml-[33px] pt-[6px]"><More /></div>
        </div>
      </div>

      {/* main toolbar */}
      <div className="h-[31px] flex items-center shrink-0 gap-[4px] whitespace-nowrap">
        <div className="h-[29px] w-[148px] bg-[#f8f8f8] flex items-center pl-[6px] shrink-0">
          <Ic n="new" />
          <div className="ml-[6px]"><Ic n="open" /></div>
          <Caret className="ml-[6px]" />
          <div className="ml-[7px]"><Ic n="save" /></div>
          <div className="w-px h-[20px] bg-[#bdbdbd] ml-[5px] mr-[8px]" />
          <Ic n="undo" />
          <Caret className="ml-[4px]" />
          <div className="ml-[22px] pt-[6px]"><More /></div>
        </div>
        <div className="h-[29px] w-[543px] bg-[#f8f8f8] flex items-center gap-[8px] pl-[5px] shrink-0">
          <T i="define" t="定义" />
          <T i="sigma" t="汇总计算" />
          <T i="cloud" t="云检查" />
          <T i="flat" t="平齐板顶" g />
          <T i="find" t="查找图元" />
          <T i="glasses" t="查看钢筋量" />
          <T i="batch" t="批量选择" g />
          <div className="ml-[34px] pt-[6px]"><More /></div>
        </div>
        <div className="h-[29px] flex-1 bg-[#f8f8f8] flex items-center pl-[8px] -ml-[1px]">
          <div className="flex items-center h-[26px] bg-white pr-[5px] pl-[1px]">
            <T i="cube" t="三维" />
          </div>
          <Caret className="ml-[6px]" />
          <T i="cubet" t="俯视" c className="ml-[3px]" />
          <ActiveT i="orbit" t="动态观察" className="ml-[4px]" />
          <T i="gray3d" t="局部三维" g className="ml-[3px]" />
          <div className="w-px h-[20px] bg-[#bdbdbd] ml-[8px] mr-[4px]" />
          <T i="globe" t="全屏" />
          <T i="zoom" t="缩放" c className="ml-[8px]" />
          <T i="pan" t="平移" c className="ml-[7px]" />
          <T i="rot" t="屏幕旋转" c className="ml-[7px]" />
          <div className="w-px h-[20px] bg-[#bdbdbd] ml-[3px] mr-[6px]" />
          <T i="floors" t="选择楼层" />
          <div className="ml-[33px] pt-[6px]"><More /></div>
        </div>
      </div>

      <div className="flex flex-1 min-h-0">
        <LeftPanel />
        <div className="flex-1 min-w-0 pl-[5px] flex flex-col whitespace-nowrap">
          {/* edit row */}
          <div className="h-[26px] w-[790px] bg-[#f8f8f8] flex items-center gap-[8px] pl-[3px] shrink-0">
            <Grip />
            <T i="brush" t="删除" className="-ml-[1px]" />
            <Sep />
            <T i="copy" t="复制" className="-ml-[3px]" />
            <T i="mirror" t="镜像" className="ml-[1px]" />
            <Sep />
            <T i="move" t="移动" />
            <T i="rot2" t="旋转" className="ml-[1px]" />
            <Sep />
            <T i="extend" t="延伸" g className="-ml-[2px]" />
            <T i="trim" t="修剪" g className="ml-[1px]" />
            <Sep />
            <T i="break" t="打断" g className="-ml-[1px]" />
            <T i="merge" t="合并" className="-ml-[1px]" />
            <T i="split" t="分割" className="-ml-[1px]" />
            <Sep />
            <T i="align" t="对齐" g c className="-ml-[1px]" />
            <T i="offset" t="偏移" className="-ml-[6px]" />
            <T i="stretch" t="拉伸" className="ml-[1px]" />
            <Sep />
            <T i="gripi" t="设置夹点" className="-ml-[1px]" />
          </div>
          <div className="h-[2px] shrink-0" />
          {/* floor / component row */}
          <div className="h-[26px] flex items-center shrink-0 gap-[33px]">
            <div className="h-full w-[567px] bg-[#f8f8f8] flex items-center pl-[3px] shrink-0">
              <Grip />
              <Sel t="基础层" className="w-[59px] ml-[2px]" />
              <Sel t="基础" className="w-[69px] ml-[3px]" />
              <Sel t="筏板基础" className="w-[69px] ml-[3px]" />
              <Sel t="FB-2" className="w-[70px] ml-[3px]" />
              <div className="w-px h-[20px] bg-[#bdbdbd] ml-[5px] mr-[5px]" />
              <T i="attr" t="属性" />
              <ActiveT i="edit" t="编辑钢筋" className="ml-[4px]" />
              <T i="list" t="构件列表" className="ml-[5px]" />
              <T i="pick" t="拾取构件" className="ml-[8px]" />
            </div>
            <div className="h-full flex-1 bg-[#f8f8f8] flex items-center pl-[3px] mr-[170px] overflow-hidden">
              <Grip />
              <T i="two" t="两点" className="ml-[4px]" />
              <T i="par" t="平行" className="ml-[8px]" />
              <T i="ang" t="点角" c className="ml-[8px]" />
              <T i="arc3" t="三点辅轴" c className="ml-[8px]" />
              <T i="brush" t="删除辅轴" className="ml-[8px]" />
            </div>
          </div>
          {/* grip strip */}
          <div className="h-[28px] shrink-0 pt-[1px] pl-[413px]">
            <div className="w-[31px] h-[23px] bg-[#f8f8f8] flex items-center pl-[4px]"><Grip /></div>
          </div>
          {/* drawing row */}
          <div className="h-[26px] ml-[2px] mr-[26px] bg-[#f8f8f8] flex items-center pl-[1px] shrink-0">
            <Grip />
            <T i="cursor" t="选择" c className="ml-[6px]" />
            <div className="w-px h-[20px] bg-[#bdbdbd] ml-[6px] mr-[7px]" />
            <T i="point" t="点" />
            <div className="w-px h-[20px] bg-[#bdbdbd] ml-[8px] mr-[3px]" />
            <T i="line" t="直线" />
            <T i="arc" t="三点画弧" c className="ml-[10px]" />
            <div className="ml-[3px] w-[59px] h-[24px] bg-white flex items-center justify-end pr-[3px]"><Caret /></div>
            <T i="rect" t="矩形" className="ml-[3px]" />
            <div className="w-px h-[20px] bg-[#bdbdbd] ml-[7px] mr-[6px]" />
            <T i="auto" t="自动生成板" />
            <T i="beamsplit" t="按梁分割" className="ml-[8px]" />
            <T i="section" t="设置筏板变截面" className="ml-[8px]" />
            <T i="viewr" t="查看板内钢筋" className="ml-[8px]" />
            <T i="slope" t="设置所有边坡" c className="ml-[8px]" />
            <T i="cancel" t="取消所有边坡" c className="ml-[7px]" />
            <T i="three" t="三点定义斜筏板" c className="ml-[7px]" />
            <T i="elev" t="查改标高" className="ml-[7px]" />
          </div>
          <div className="h-[2px] shrink-0" />
          <Canvas />
          <div className="h-px shrink-0" />
          {/* snap row */}
          <div className="h-[26px] ml-[212px] w-[678px] bg-[#f8f8f8] flex items-center pl-[3px] shrink-0">
            <Grip />
            <T i="cross" t="交点" className="ml-[6px]" />
            <div className="flex items-center ml-[5px] h-[24px] w-[51px] px-[2px] border border-[#1a86d8] bg-[#e8f2fb]"><Ic n="perp" /><span className="ml-[3px]">垂点</span></div>
            <div className="flex items-center h-[24px] w-[51px] -ml-px px-[2px] border border-[#1a86d8] bg-[#e8f2fb]"><Ic n="mid" /><span className="ml-[5px]">中点</span></div>
            <T i="penta" t="顶点" className="ml-[4px]" />
            <T i="coord" t="坐标" className="ml-[9px]" />
            <div className="ml-[8px]"><Grip /></div>
            <Sel t="不偏移" className="w-[58px] ml-[3px]" />
            <div className="w-px h-[20px] bg-[#bdbdbd] ml-[5px] mr-[3px]" />
            <span className="text-[13px] text-[#808080] w-[18px]">X=</span>
            <Spin v="0" className="w-[59px]" />
            <span className="text-[13px] text-[#808080] ml-[1px] w-[27px]">mm</span>
            <span className="text-[13px] text-[#808080] w-[18px]">Y=</span>
            <Spin v="0" className="w-[59px]" />
            <span className="text-[13px] text-[#808080] ml-[1px] w-[25px]">mm</span>
            <div className="w-px h-[20px] bg-[#bdbdbd]" />
            <div className="w-[11px] h-[11px] border border-[#808080] bg-white ml-[4px]" />
            <span className="ml-[8px] text-[#111]">旋转</span>
            <Spin v="0.000" className="w-[67px] ml-[5px]" />
            <span className="ml-[4px] text-[#777]">°</span>
          </div>
          {/* rebar grid */}
          <div className="flex flex-1 min-h-0 mt-[8px]">
            <div className="w-[13px] shrink-0 flex flex-col">
              <svg width="10" height="10" viewBox="0 0 10 10" className="shrink-0"><path d="M.5.500h9v9h-9z" fill="#eee" stroke="#555" /><path d="M2 2l6 6M8 2L2 8" stroke="#c03030" strokeWidth="1.300" /></svg>
              <div className="flex-1 mt-[2px] bg-[radial-gradient(#bdbdbd_1px,transparent_1px)] bg-[length:5px_6px]" />
            </div>
            <div className="flex-1 min-w-0 flex flex-col">
              <div className="h-[25px] flex items-center shrink-0 pl-[5px] bg-[#f4f4f4]">
                <Ic n="first" s={13} />
                <div className="ml-[10px]"><Ic n="prev" s={13} /></div>
                <div className="ml-[10px]"><Ic n="next" s={13} /></div>
                <div className="ml-[10px]"><Ic n="last" s={13} /></div>
                <div className="w-px h-[20px] bg-[#c8c8c8] ml-[8px] mr-[6px]" />
                <Ic n="up" s={13} />
                <div className="ml-[10px]"><Ic n="down" s={13} /></div>
                <div className="w-px h-[20px] bg-[#c8c8c8] ml-[8px] mr-[8px]" />
                <T i="ins" t="插入" g />
                <T i="del" t="删除" g className="ml-[8px]" />
                <T i="scale" t="缩尺配筋" g className="ml-[8px]" />
                <T i="info" t="钢筋信息" g className="ml-[7px]" />
                <T i="lib" t="钢筋图库" g className="ml-[7px]" />
                <T i="other" t="其他" c className="ml-[7px]" />
                <span className="ml-[5px] text-[#111]">关闭</span>
                <div className="w-px h-[20px] bg-[#c8c8c8] ml-[8px] mr-[6px]" />
                <span className="text-[#111] text-[12px]">单构件钢筋总重(kg)：0</span>
              </div>
              <RebarGrid />
            </div>
          </div>
        </div>
      </div>

      <StatusBar />
      <Taskbar />

      {/* desktop overlays from other apps */}
      <div className="absolute left-[463px] -top-[21px] w-[44px] h-[44px] rounded-full bg-[#3fae3f] border-2 border-[#d8e8d8] shadow-[0_2px_4px_rgba(0,0,0,0.5)] flex items-end justify-center pb-[3px] text-white text-[12px]">67</div>
      <div className="absolute left-[1075px] top-[82px] w-[121px] h-[51px] rounded-full bg-white shadow-[1px_2px_5px_rgba(0,0,0,0.4)] flex items-center pl-[4px] whitespace-nowrap">
        <div className="w-[43px] h-[43px] rounded-full bg-[#27c873] flex items-center justify-center shrink-0">
          <svg width="30" height="26" viewBox="0 0 30 26"><path d="M2 9c8-8 18-8 26 0M7 14c5-5 11-5 16 0M11 19c3-3 5-3 8 0" fill="none" stroke="#fff" strokeWidth="2.600" /><circle cx="15" cy="23" r="1.800" fill="#fff" /></svg>
        </div>
        <div className="ml-[5px] flex flex-col gap-[6px] text-[#707070] text-[11px]">
          <div className="flex items-center gap-[6px]">
            <svg width="9" height="14" viewBox="0 0 9 14"><path d="M2 13V1M2 13L.5 10M6.500 1v12M6.500 1L8 4" fill="none" stroke="#e88020" strokeWidth="1.600" /><path d="M2 1v8" stroke="#27c873" strokeWidth="1.600" /></svg>
            <span>0.00K/s</span>
          </div>
          <div className="flex items-center gap-[6px]">
            <svg width="9" height="14" viewBox="0 0 9 14"><path d="M3 0h3v2h3v12H0V2h3z" fill="#27c873" /></svg>
            <span>0</span>
          </div>
        </div>
      </div>
    </div>
  );
}
